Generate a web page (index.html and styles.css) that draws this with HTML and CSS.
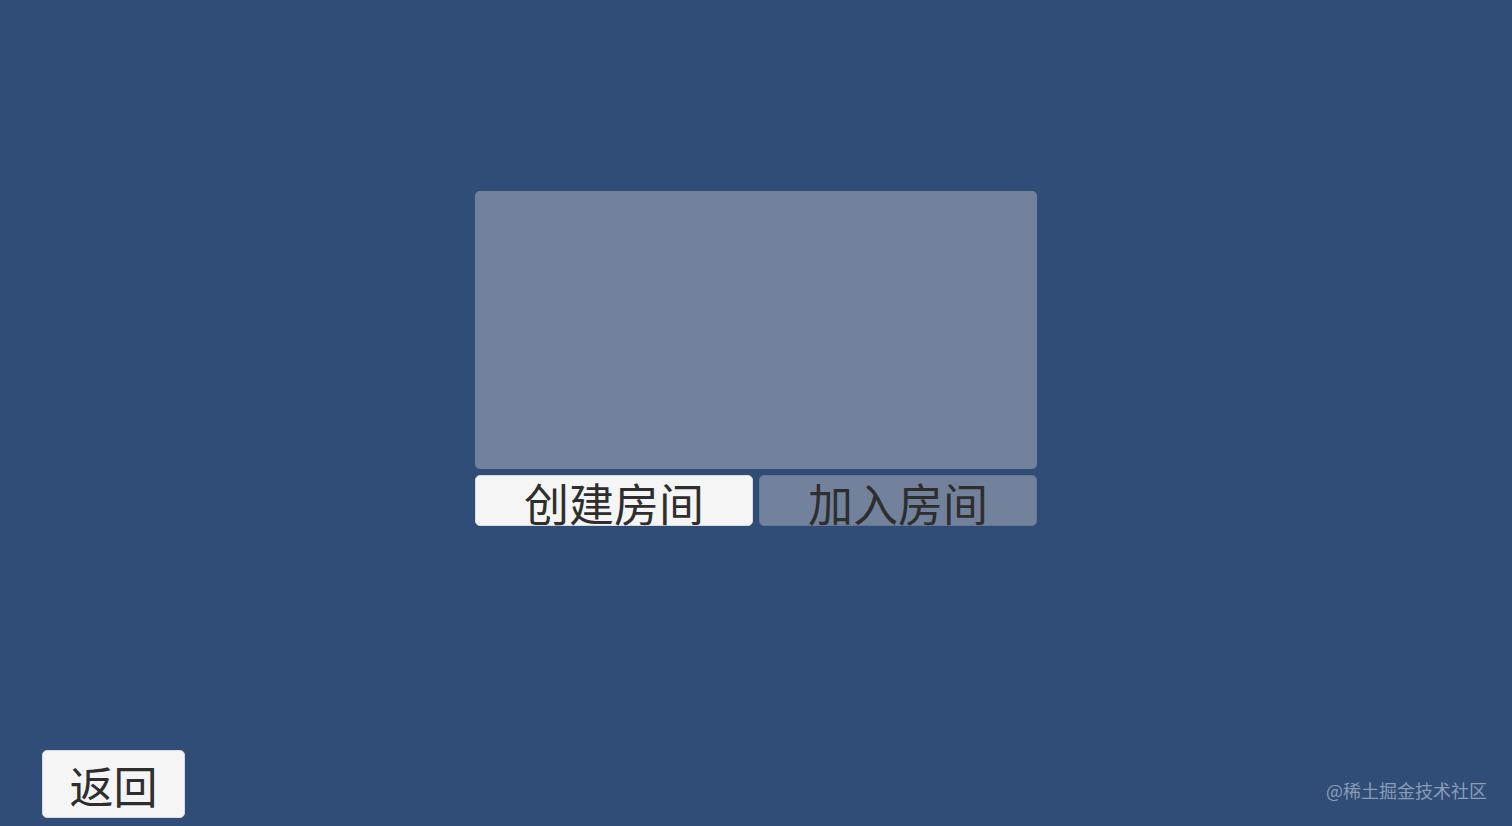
FILE: index.html
```html
<!DOCTYPE html>
<html lang="zh">
<head>
<meta charset="utf-8">
<link rel="stylesheet" href="styles.css">
</head>
<body>
<div class="screen">
  <main class="lobby">
    <div class="room-list"></div>
    <div class="actions">
      <button class="btn btn-create"><span class="label">创建房间</span></button>
      <button class="btn btn-join"><span class="label">加入房间</span></button>
    </div>
  </main>
  <footer class="footer">
    <button class="btn btn-back">返回</button>
  </footer>
  <div class="watermark">@稀土掘金技术社区</div>
</div>
</body>
</html>
```
FILE: styles.css
```css
html, body {
  margin: 0;
  padding: 0;
  height: 100%;
}
body {
  background: #304d78;
  font-family: "Noto Sans CJK SC", "Noto Sans", sans-serif;
  overflow: hidden;
}
.screen {
  position: relative;
  height: 826px;
  display: flex;
  flex-direction: column;
}
.lobby {
  margin: 191px auto 0;
  width: 562px;
  display: flex;
  flex-direction: column;
  gap: 6px;
}
.room-list {
  height: 278px;
  background: #72829c;
  border-radius: 5px;
}
.actions {
  display: flex;
  gap: 6px;
}
.btn {
  font-family: "Noto Sans CJK SC", "Noto Sans", sans-serif;
  color: #2e2e2e;
  border-radius: 5px;
  padding: 0;
  cursor: pointer;
}
.actions .btn {
  flex: 1;
  height: 51px;
  display: flex;
  align-items: center;
  justify-content: center;
}
.label {
  font-size: 45px;
  line-height: 45px;
  display: block;
  padding-top: 3px;
}
.btn-create {
  background: #f5f5f5;
  border: 1px solid #d8dbe0;
}
.btn-join {
  background: #72829c;
  border: 1px solid #667792;
}
.footer {
  margin-top: auto;
  padding: 0 0 8px 42px;
  display: flex;
}
.btn-back {
  width: 143px;
  height: 68px;
  background: #f5f5f5;
  border: 1px solid #d8dbe0;
  font-size: 44px;
  line-height: 68px;
}
.watermark {
  position: absolute;
  right: 25px;
  bottom: 24px;
  font-size: 18px;
  line-height: 24px;
  color: #8a9bb6;
}
```
